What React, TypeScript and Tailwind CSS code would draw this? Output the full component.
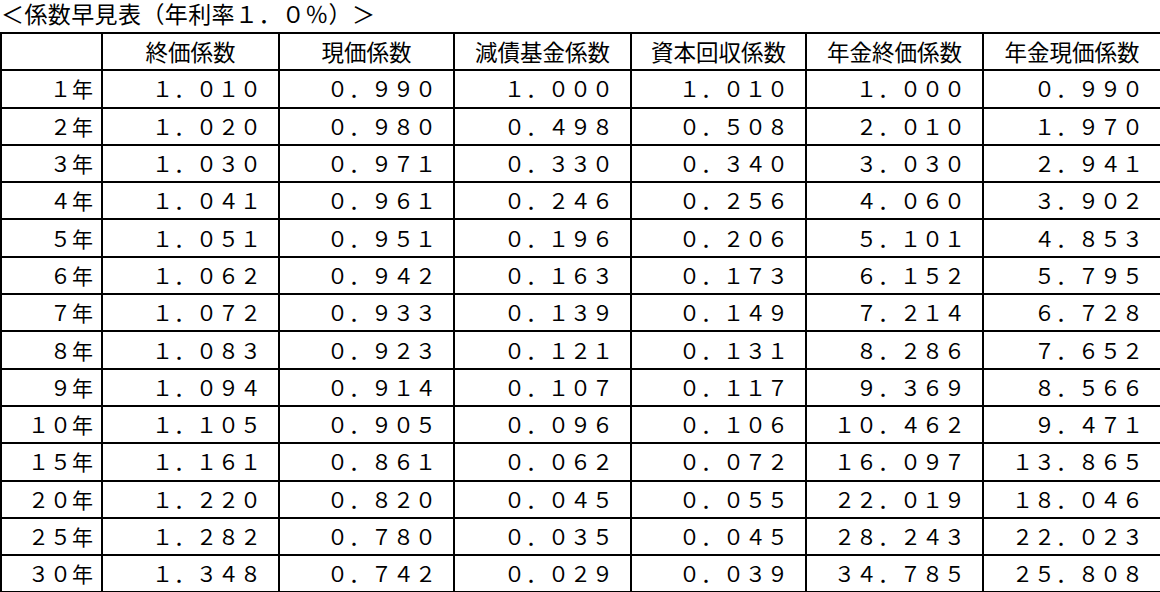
const toFull = (s: string) =>
  s.replace(/[0-9.]/g, (c) => (c === "." ? "．" : String.fromCharCode(c.charCodeAt(0) + 0xfee0)));

const headers = ["終価係数", "現価係数", "減債基金係数", "資本回収係数", "年金終価係数", "年金現価係数"];

const rows: [string, string[]][] = [
  ["1", ["1.010", "0.990", "1.000", "1.010", "1.000", "0.990"]],
  ["2", ["1.020", "0.980", "0.498", "0.508", "2.010", "1.970"]],
  ["3", ["1.030", "0.971", "0.330", "0.340", "3.030", "2.941"]],
  ["4", ["1.041", "0.961", "0.246", "0.256", "4.060", "3.902"]],
  ["5", ["1.051", "0.951", "0.196", "0.206", "5.101", "4.853"]],
  ["6", ["1.062", "0.942", "0.163", "0.173", "6.152", "5.795"]],
  ["7", ["1.072", "0.933", "0.139", "0.149", "7.214", "6.728"]],
  ["8", ["1.083", "0.923", "0.121", "0.131", "8.286", "7.652"]],
  ["9", ["1.094", "0.914", "0.107", "0.117", "9.369", "8.566"]],
  ["10", ["1.105", "0.905", "0.096", "0.106", "10.462", "9.471"]],
  ["15", ["1.161", "0.861", "0.062", "0.072", "16.097", "13.865"]],
  ["20", ["1.220", "0.820", "0.045", "0.055", "22.019", "18.046"]],
  ["25", ["1.282", "0.780", "0.035", "0.045", "28.243", "22.023"]],
  ["30", ["1.348", "0.742", "0.029", "0.039", "34.785", "25.808"]],
];

export default function App() {
  return (
    <div className="w-[1160px] h-[592px] bg-white text-black overflow-hidden font-['Noto_Sans_CJK_JP',sans-serif]">
      <div className="h-[32px] text-[23px] leading-[27px] tracking-[0.4px] pl-[1px]">＜係数早見表（年利率１．０％）＞</div>
      <table className="table-fixed w-[1160px] border-collapse border-2 border-black text-[21px]">
        <colgroup>
          <col className="w-[101px]" />
          <col className="w-[177px]" />
          <col className="w-[175px]" />
          <col className="w-[177px]" />
          <col className="w-[175px]" />
          <col className="w-[177px]" />
          <col className="w-[178px]" />
        </colgroup>
        <thead>
          <tr className="h-[37.3px]">
            <th className="border-2 border-black"></th>
            {headers.map((h) => (
              <th key={h} className="border-2 border-black font-normal text-center p-0 leading-[33px] text-[22.5px]">
                {h}
              </th>
            ))}
          </tr>
        </thead>
        <tbody>
          {rows.map(([year, vals]) => (
            <tr key={year} className="h-[37.3px]">
              <td className="border-2 border-black text-right pr-[7px] p-0 leading-[33px] tracking-[1px]">
                {toFull(year)}年
              </td>
              {vals.map((v, i) => (
                <td key={i} className="border-2 border-black text-right pr-[16px] p-0 leading-[33px] tracking-[1px]">
                  {toFull(v)}
                </td>
              ))}
            </tr>
          ))}
        </tbody>
      </table>
    </div>
  );
}
